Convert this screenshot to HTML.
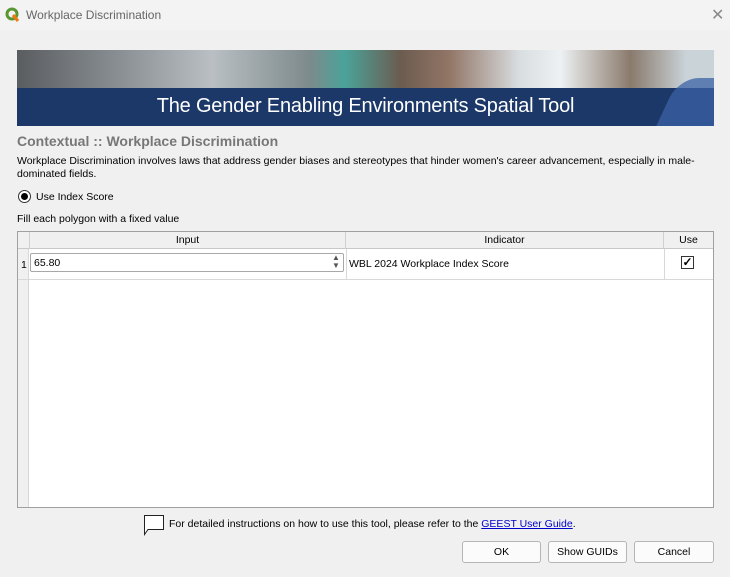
<!DOCTYPE html>
<html><head><meta charset="utf-8"><style>
*{box-sizing:border-box;margin:0;padding:0}
body{width:730px;height:577px;background:#f0f0f0;font-family:"Liberation Sans",sans-serif;font-size:10.5px;color:#000;position:relative;overflow:hidden}
.abs{position:absolute}
.btn{position:absolute;top:541px;height:22px;border:1px solid #b5b5b5;background:#fbfbfb;border-radius:3px;text-align:center;line-height:20px;font-size:10.5px}
</style></head><body>
<div class="abs" style="left:0;top:0;width:730px;height:30px;background:#f3f3f3"></div>
<svg class="abs" style="left:5px;top:7px" width="14" height="15" viewBox="0 0 14 15"><circle cx="7" cy="7" r="5" fill="none" stroke="#589632" stroke-width="3"/><path d="M8 8 L13 14" stroke="#ee7913" stroke-width="3"/></svg>
<div class="abs" style="left:26px;top:8px;font-size:12px;color:#666">Workplace Discrimination</div>
<div class="abs" style="left:711px;top:5px;font-size:16px;color:#888">✕</div>

<div class="abs" style="left:17px;top:50px;width:697px;height:76px;overflow:hidden;background:linear-gradient(90deg,#5a5d60 0%,#8a9094 15%,#b9bfc3 28%,#7d8a8c 42%,#4aa39a 47%,#6b5c50 55%,#927566 62%,#d8dde0 72%,#edf1f3 78%,#8a7a6c 88%,#c9d3d8 96%)">
<div style="position:absolute;left:0;top:38px;width:697px;height:38px;background:#1c3868"></div>
<div style="position:absolute;left:650px;top:28px;width:60px;height:50px;background:#3b62a6;transform:skewX(-25deg);border-radius:20px 0 0 0;opacity:.75"></div>
<div style="position:absolute;left:0;top:45px;width:697px;text-align:center;color:#fff;font-size:20px;letter-spacing:-0.2px">The Gender Enabling Environments Spatial Tool</div>
</div>

<div class="abs" style="left:17px;top:133px;font-size:14px;font-weight:bold;color:#777">Contextual :: Workplace Discrimination</div>
<div class="abs" style="left:17px;top:155px;width:700px;line-height:13px">Workplace Discrimination involves laws that address gender biases and stereotypes that hinder women's career advancement, especially in male-dominated fields.</div>
<div class="abs" style="left:18px;top:190px;width:13px;height:13px;border:1px solid #333;border-radius:50%;background:#fff"><div style="margin:2px;width:7px;height:7px;border-radius:50%;background:#000"></div></div>
<div class="abs" style="left:36px;top:191px">Use Index Score</div>
<div class="abs" style="left:17px;top:213px">Fill each polygon with a fixed value</div>

<div class="abs" style="left:17px;top:231px;width:697px;height:277px;border:1px solid #a0a0a0;background:#fff">
<div class="abs" style="left:0;top:0;width:11px;height:275px;background:#f0f0f0;border-right:1px solid #d8d8d8"></div>
<div class="abs" style="left:0;top:0;width:695px;height:17px;background:#f0f0f0;border-bottom:1px solid #c8c8c8"></div>
<div class="abs" style="left:11px;top:0;width:317px;height:17px;border-left:1px solid #d0d0d0;border-right:1px solid #d0d0d0;text-align:center;line-height:17px">Input</div>
<div class="abs" style="left:328px;top:0;width:318px;height:17px;border-right:1px solid #d0d0d0;text-align:center;line-height:17px">Indicator</div>
<div class="abs" style="left:646px;top:0;width:49px;height:17px;text-align:center;line-height:17px">Use</div>
<div class="abs" style="left:0;top:17px;width:695px;height:31px;border-bottom:1px solid #d8d8d8"></div>
<div class="abs" style="left:3px;top:27px">1</div>
<div class="abs" style="left:328px;top:17px;width:1px;height:31px;background:#d8d8d8"></div>
<div class="abs" style="left:646px;top:17px;width:1px;height:31px;background:#d8d8d8"></div>
<div class="abs" style="left:12px;top:21px;width:314px;height:19px;border:1px solid #a8a8a8;border-radius:2px;background:#fff"></div>
<div class="abs" style="left:16px;top:25px">65.80</div>
<div class="abs" style="left:314px;top:22px;font-size:8px;line-height:8px;color:#555">▲<br>▼</div>
<div class="abs" style="left:331px;top:26px">WBL 2024 Workplace Index Score</div>
<div class="abs" style="left:663px;top:24px;width:13px;height:13px;border:1px solid #333;background:#fff;text-align:center;line-height:11px;font-size:12px;font-weight:bold">✓</div>
</div>

<svg class="abs" style="left:143px;top:514px" width="22" height="22" viewBox="0 0 22 22"><path d="M1.5 1.5 H20.5 V15.5 H5 L1.5 20.5 Z" fill="#fff" stroke="#222"/></svg>
<div class="abs" style="left:169px;top:518px">For detailed instructions on how to use this tool, please refer to the <span style="color:#00c;text-decoration:underline">GEEST User Guide</span>.</div>
<div class="btn" style="left:462px;width:79px">OK</div>
<div class="btn" style="left:548px;width:79px">Show GUIDs</div>
<div class="btn" style="left:634px;width:80px">Cancel</div>
</body></html>
